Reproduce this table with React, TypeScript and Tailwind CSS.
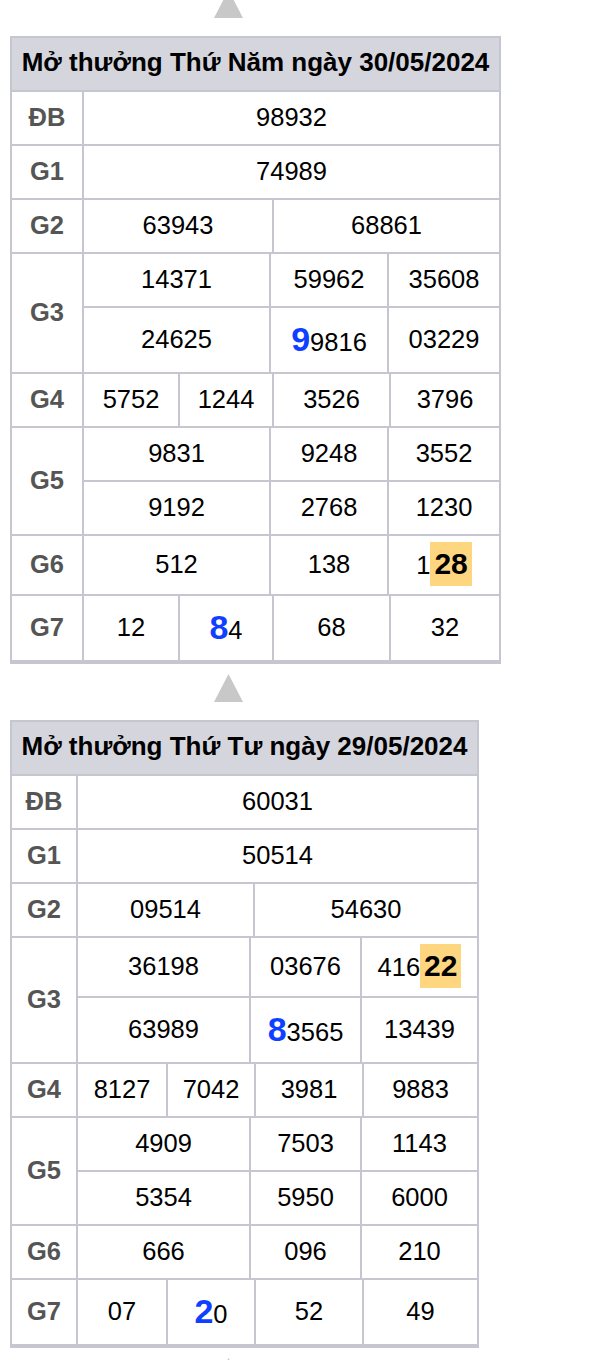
type Cell =
  | string
  | { big: string; rest: string }
  | { pre: string; hl: string };

type Line = { h: string; cells: { w?: string; v: Cell }[] };
type Prize = { label: string; lines: Line[] };

type Draw = {
  title: string;
  width: string;
  labelW: string;
  prizes: Prize[];
};

const draws: Draw[] = [
  {
    title: 'Mở thưởng Thứ Năm ngày 30/05/2024',
    width: 'w-[491px]',
    labelW: 'w-[70px]',
    prizes: [
      { label: 'ĐB', lines: [{ h: 'h-[52px]', cells: [{ v: '98932' }] }] },
      { label: 'G1', lines: [{ h: 'h-[52px]', cells: [{ v: '74989' }] }] },
      { label: 'G2', lines: [{ h: 'h-[52px]', cells: [{ w: 'w-[188px]', v: '63943' }, { v: '68861' }] }] },
      {
        label: 'G3',
        lines: [
          { h: 'h-[52px]', cells: [{ w: 'w-[185px]', v: '14371' }, { w: 'w-[116px]', v: '59962' }, { v: '35608' }] },
          { h: 'h-[64px]', cells: [{ w: 'w-[185px]', v: '24625' }, { w: 'w-[116px]', v: { big: '9', rest: '9816' } }, { v: '03229' }] },
        ],
      },
      {
        label: 'G4',
        lines: [
          {
            h: 'h-[52px]',
            cells: [{ w: 'w-[94px]', v: '5752' }, { w: 'w-[92px]', v: '1244' }, { w: 'w-[115px]', v: '3526' }, { v: '3796' }],
          },
        ],
      },
      {
        label: 'G5',
        lines: [
          { h: 'h-[52px]', cells: [{ w: 'w-[185px]', v: '9831' }, { w: 'w-[116px]', v: '9248' }, { v: '3552' }] },
          { h: 'h-[52px]', cells: [{ w: 'w-[185px]', v: '9192' }, { w: 'w-[116px]', v: '2768' }, { v: '1230' }] },
        ],
      },
      {
        label: 'G6',
        lines: [{ h: 'h-[58px]', cells: [{ w: 'w-[185px]', v: '512' }, { w: 'w-[116px]', v: '138' }, { v: { pre: '1', hl: '28' } }] }],
      },
      {
        label: 'G7',
        lines: [
          {
            h: 'h-[64px]',
            cells: [{ w: 'w-[94px]', v: '12' }, { w: 'w-[92px]', v: { big: '8', rest: '4' } }, { w: 'w-[115px]', v: '68' }, { v: '32' }],
          },
        ],
      },
    ],
  },
  {
    title: 'Mở thưởng Thứ Tư ngày 29/05/2024',
    width: 'w-[469px]',
    labelW: 'w-[64px]',
    prizes: [
      { label: 'ĐB', lines: [{ h: 'h-[52px]', cells: [{ v: '60031' }] }] },
      { label: 'G1', lines: [{ h: 'h-[52px]', cells: [{ v: '50514' }] }] },
      { label: 'G2', lines: [{ h: 'h-[52px]', cells: [{ w: 'w-[175px]', v: '09514' }, { v: '54630' }] }] },
      {
        label: 'G3',
        lines: [
          { h: 'h-[58px]', cells: [{ w: 'w-[171px]', v: '36198' }, { w: 'w-[109px]', v: '03676' }, { v: { pre: '416', hl: '22' } }] },
          { h: 'h-[64px]', cells: [{ w: 'w-[171px]', v: '63989' }, { w: 'w-[109px]', v: { big: '8', rest: '3565' } }, { v: '13439' }] },
        ],
      },
      {
        label: 'G4',
        lines: [
          {
            h: 'h-[52px]',
            cells: [{ w: 'w-[88px]', v: '8127' }, { w: 'w-[86px]', v: '7042' }, { w: 'w-[106px]', v: '3981' }, { v: '9883' }],
          },
        ],
      },
      {
        label: 'G5',
        lines: [
          { h: 'h-[52px]', cells: [{ w: 'w-[171px]', v: '4909' }, { w: 'w-[109px]', v: '7503' }, { v: '1143' }] },
          { h: 'h-[52px]', cells: [{ w: 'w-[171px]', v: '5354' }, { w: 'w-[109px]', v: '5950' }, { v: '6000' }] },
        ],
      },
      {
        label: 'G6',
        lines: [{ h: 'h-[52px]', cells: [{ w: 'w-[171px]', v: '666' }, { w: 'w-[109px]', v: '096' }, { v: '210' }] }],
      },
      {
        label: 'G7',
        lines: [
          {
            h: 'h-[64px]',
            cells: [{ w: 'w-[88px]', v: '07' }, { w: 'w-[86px]', v: { big: '2', rest: '0' } }, { w: 'w-[106px]', v: '52' }, { v: '49' }],
          },
        ],
      },
    ],
  },
];

const Arrow = ({ className = '' }: { className?: string }) => (
  <svg width="29" height="28" viewBox="0 0 29 28" className={`ml-[204px] block ${className}`}>
    <polygon points="14.5,0 29,28 0,28" fill="#c8c8c8" />
  </svg>
);

const CellValue = ({ v }: { v: Cell }) => {
  if (typeof v === 'string') return <span>{v}</span>;
  if ('big' in v) {
    return (
      <span>
        <span className="text-[34px] font-bold text-[#1040ff]">{v.big}</span>
        {v.rest}
      </span>
    );
  }
  return (
    <span>
      {v.pre}
      <span className="inline-block bg-[#fed680] px-[4px] py-[5px] text-[30px] font-bold leading-[normal]">{v.hl}</span>
    </span>
  );
};

const DrawTable = ({ draw }: { draw: Draw }) => (
  <div className={`${draw.width} flex flex-col gap-[2px] bg-[#c5c6d0] p-[2px] pb-[4px]`}>
    <div className="flex h-[52px] items-center justify-center bg-[#d4d5dd] pb-[3px] text-[26px] font-bold text-black">
      {draw.title}
    </div>
    {draw.prizes.map((prize) => (
      <div key={prize.label} className="flex gap-[2px]">
        <div className={`${draw.labelW} flex shrink-0 items-center justify-center bg-white pb-[2px] font-bold text-[#555]`}>
          {prize.label}
        </div>
        <div className="flex flex-1 flex-col gap-[2px]">
          {prize.lines.map((line, i) => (
            <div key={i} className={`flex gap-[2px] ${line.h}`}>
              {line.cells.map((c, j) => (
                <div
                  key={j}
                  className={`flex items-center justify-center bg-white pb-[2px] text-black ${c.w ? `${c.w} shrink-0` : 'flex-1'}`}
                >
                  <CellValue v={c.v} />
                </div>
              ))}
            </div>
          ))}
        </div>
      </div>
    ))}
  </div>
);

export default function App() {
  return (
    <div className="min-h-[1360px] bg-white pl-[10px] font-['Liberation_Sans',Arial,sans-serif] text-[25.5px] leading-[normal]">
      <div className="flex flex-col">
        <Arrow className="-mt-[10px]" />
        <div className="mt-[18px]">
          <DrawTable draw={draws[0]} />
        </div>
        <Arrow className="mt-[10px]" />
        <div className="mt-[18px]">
          <DrawTable draw={draws[1]} />
        </div>
        <Arrow className="mt-[10px]" />
      </div>
    </div>
  );
}
